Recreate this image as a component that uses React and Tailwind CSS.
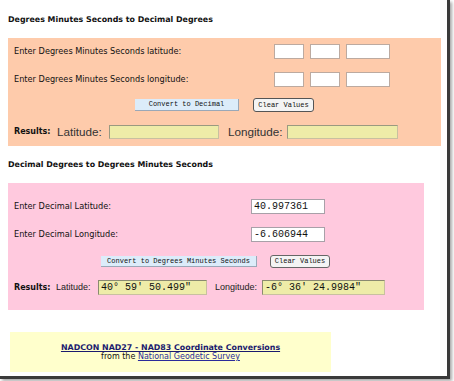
import React from "react";

const verdana = { fontFamily: '"DejaVu Sans", Verdana, sans-serif' };
const mono = { fontFamily: '"Liberation Mono", "Courier New", monospace' };
const arial = { fontFamily: '"Liberation Sans", Arial, sans-serif' };

const Box = ({ w }) => (
  <div className={`h-[15px] bg-white border border-[#bcaaa0] ${w}`} />
);

export default function App() {
  return (
    <div className="w-[454px] h-[381px] bg-white overflow-hidden">
      <div
        className="relative w-[450px] h-[379px] bg-white border-r-[3px] border-b-[3px] border-[#3a3a3a] shadow-[2px_2px_3px_rgba(0,0,0,0.35)] text-[#111]"
        style={verdana}
      >
        {/* section 1 */}
        <div className="pl-[8px] pt-[15px]">
          <h2 className="text-[7.9px] font-bold leading-[10px] h-[10px]">
            Degrees Minutes Seconds to Decimal Degrees
          </h2>

          <div className="mt-[13px] w-[433px] h-[108px] bg-[#fecbab] pl-[6px] pt-[6px] text-[8.2px]">
            <div className="flex items-center h-[15px]">
              <span className="w-[260px]">Enter Degrees Minutes Seconds latitude:</span>
              <div className="flex gap-[6px]">
                <Box w="w-[30px]" />
                <Box w="w-[30px]" />
                <Box w="w-[44px]" />
              </div>
            </div>
            <div className="flex items-center h-[15px] mt-[13px]">
              <span className="w-[260px]">Enter Degrees Minutes Seconds longitude:</span>
              <div className="flex gap-[6px]">
                <Box w="w-[30px]" />
                <Box w="w-[30px]" />
                <Box w="w-[44px]" />
              </div>
            </div>
            <div className="flex items-center h-[14px] mt-[11px] pl-[121px] gap-[14px]" style={mono}>
              <div className="w-[104px] h-[12px] bg-[#dcecfa] border-r border-b border-[#9aa8b8] text-[7px] flex items-center justify-center">
                Convert to Decimal
              </div>
              <div className="w-[61px] h-[14px] bg-[#f4f4f4] border border-[#555] rounded-[3px] text-[7px] flex items-center justify-center">
                Clear Values
              </div>
            </div>
            <div className="flex items-center h-[14px] mt-[13px]">
              <span className="font-bold text-[8px] w-[43px]">Results:</span>
              <span className="text-[11.7px] text-[#333] w-[52px]" style={arial}>
                Latitude:
              </span>
              <div className="w-[110px] h-[14px] bg-[#eeeca8] border border-[#c8c0a0] border-t-[#9a9a80] border-l-[#9a9a80]" />
              <span className="text-[11.7px] text-[#333] ml-[9px] w-[59px]" style={arial}>
                Longitude:
              </span>
              <div className="w-[111px] h-[14px] bg-[#eeeca8] border border-[#c8c0a0] border-t-[#9a9a80] border-l-[#9a9a80]" />
            </div>
          </div>

          {/* section 2 */}
          <h2 className="mt-[14px] text-[7.9px] font-bold leading-[10px] h-[10px]">
            Decimal Degrees to Degrees Minutes Seconds
          </h2>

          <div className="mt-[13px] w-[416px] h-[127px] bg-[#ffc9de] pl-[6px] pt-[16px] text-[8.2px]">
            <div className="flex items-center h-[15px]">
              <span className="w-[237px]">Enter Decimal Latitude:</span>
              <div className="w-[74px] h-[15px] bg-white border border-[#a8a0a8] text-[10px] pl-[2px] leading-[13px]" style={mono}>
                40.997361
              </div>
            </div>
            <div className="flex items-center h-[15px] mt-[13px]">
              <span className="w-[237px]">Enter Decimal Longitude:</span>
              <div className="w-[74px] h-[15px] bg-white border border-[#a8a0a8] text-[10px] pl-[2px] leading-[13px]" style={mono}>
                -6.606944
              </div>
            </div>
            <div className="flex items-center h-[13px] mt-[13px] pl-[87px] gap-[13px]" style={mono}>
              <div className="w-[156px] h-[11px] bg-[#dcecfa] border-r border-b border-[#9aa8b8] text-[7px] flex items-center justify-center">
                Convert to Degrees Minutes Seconds
              </div>
              <div className="w-[60px] h-[13px] bg-[#f4f4f4] border border-[#666] rounded-[3px] text-[7px] flex items-center justify-center">
                Clear Values
              </div>
            </div>
            <div className="flex items-center h-[15px] mt-[12px]">
              <span className="font-bold text-[8px] w-[42px]">Results:</span>
              <span className="w-[42px] text-[9px] text-[#222]" style={arial}>Latitude:</span>
              <div className="w-[109px] h-[15px] bg-[#eeeca8] border border-[#c8c0a0] border-t-[#8a8a70] border-l-[#8a8a70] text-[10px] pl-[2px] leading-[13px]" style={mono}>
                40° 59' 50.499"
              </div>
              <span className="ml-[8px] w-[47px] text-[9px] text-[#222]" style={arial}>Longitude:</span>
              <div className="w-[123px] h-[15px] bg-[#eeeca8] border border-[#c8c0a0] border-t-[#8a8a70] border-l-[#8a8a70] text-[10px] pl-[2px] leading-[13px]" style={mono}>
                -6° 36' 24.9984"
              </div>
            </div>
          </div>

          {/* footer */}
          <div className="mt-[22px] ml-[2px] w-[321px] h-[40px] bg-[#ffffcc] flex flex-col items-center justify-center text-[8px] leading-[9px]">
            <a href="#" className="font-bold text-[#1a1a6e] underline text-[7.9px]">
              NADCON NAD27 - NAD83 Coordinate Conversions
            </a>
            <span>
              from the{" "}
              <a href="#" className="text-[#2b2b9a] underline">
                National Geodetic Survey
              </a>
            </span>
          </div>
        </div>
      </div>
    </div>
  );
}
